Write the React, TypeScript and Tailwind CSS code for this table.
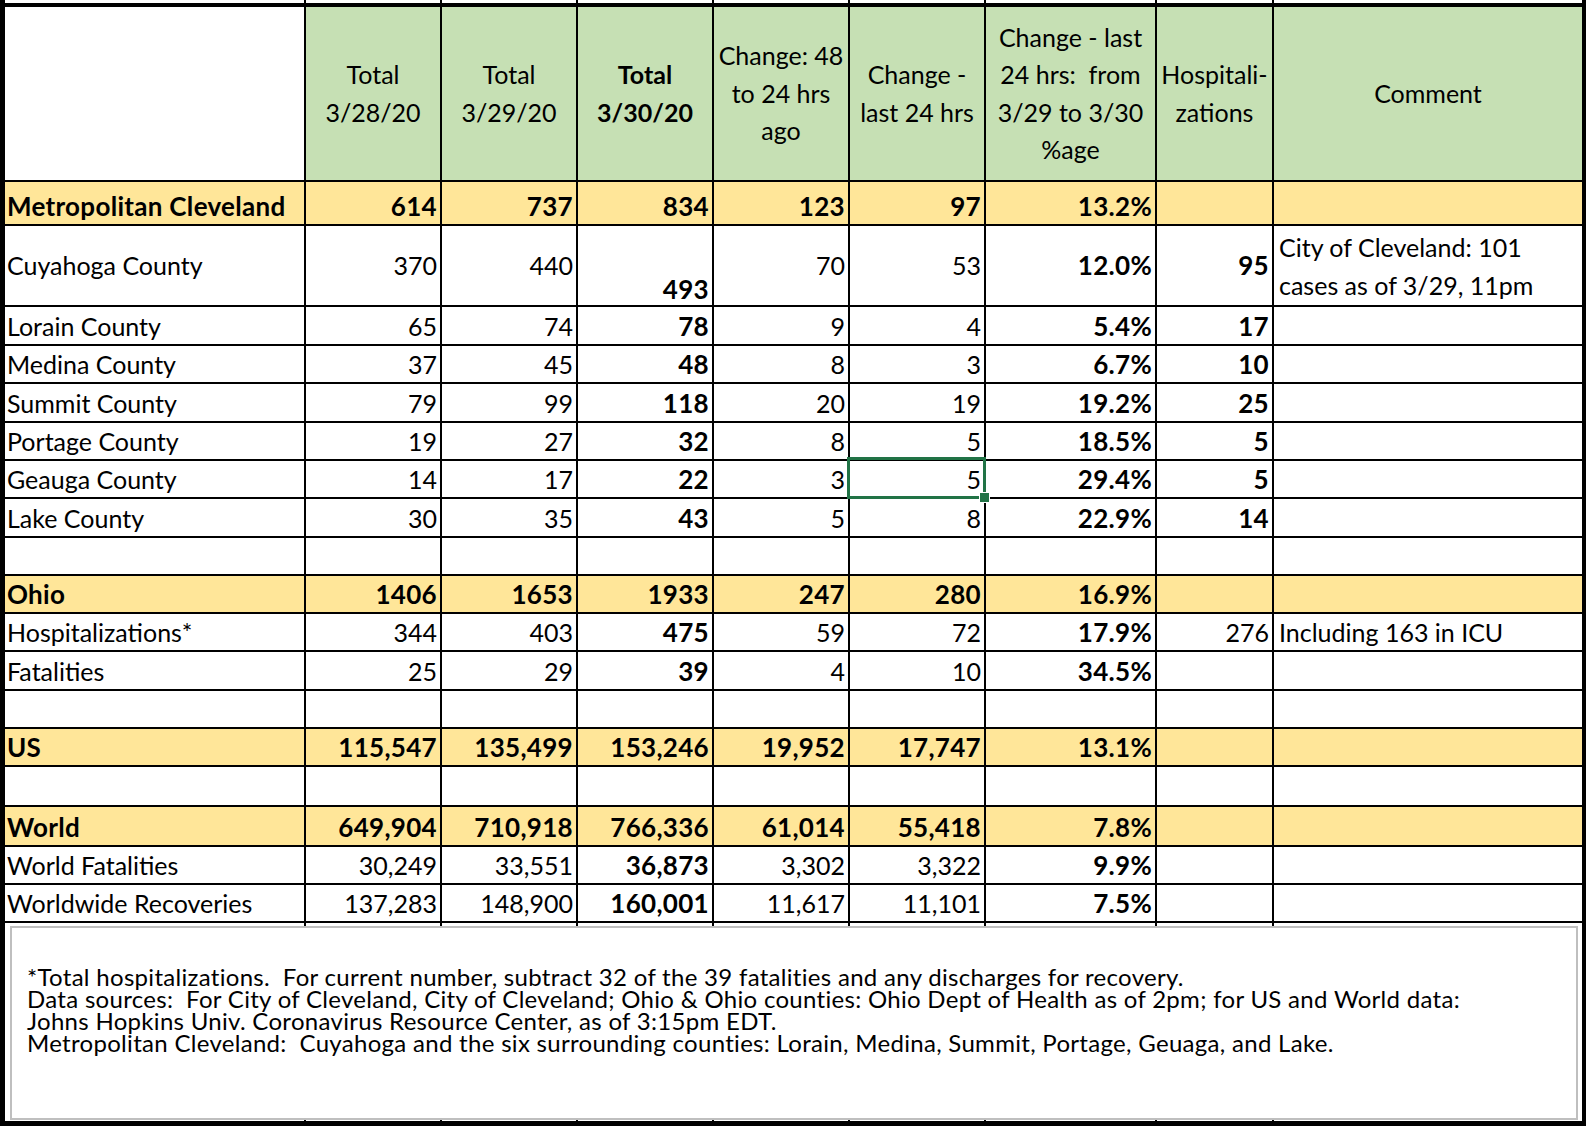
import clsx from 'clsx'

const COLS = 'grid grid-cols-[301px_136px_136px_136px_136px_136px_171px_117px_308px]'

type RowDef = {
  label: string
  vals: string[]
  h: string
  total?: boolean
  hosp?: string
  hospRegular?: boolean
  comment?: string
  selected?: boolean
}

const rows: RowDef[] = [
  { label: 'Lorain County', vals: ['65', '74', '78', '9', '4', '5.4%'], hosp: '17', h: 'h-[39px]' },
  { label: 'Medina County', vals: ['37', '45', '48', '8', '3', '6.7%'], hosp: '10', h: 'h-[38px]' },
  { label: 'Summit County', vals: ['79', '99', '118', '20', '19', '19.2%'], hosp: '25', h: 'h-[39px]' },
  { label: 'Portage County', vals: ['19', '27', '32', '8', '5', '18.5%'], hosp: '5', h: 'h-[38px]' },
  { label: 'Geauga County', vals: ['14', '17', '22', '3', '5', '29.4%'], hosp: '5', h: 'h-[38px]', selected: true },
  { label: 'Lake County', vals: ['30', '35', '43', '5', '8', '22.9%'], hosp: '14', h: 'h-[39px]' },
  { label: '', vals: ['', '', '', '', '', ''], h: 'h-[38px]' },
  { label: 'Ohio', vals: ['1406', '1653', '1933', '247', '280', '16.9%'], h: 'h-[38px]', total: true },
  {
    label: 'Hospitalizations*',
    vals: ['344', '403', '475', '59', '72', '17.9%'],
    hosp: '276',
    hospRegular: true,
    comment: 'Including 163 in ICU',
    h: 'h-[38px]'
  },
  { label: 'Fatalities', vals: ['25', '29', '39', '4', '10', '34.5%'], h: 'h-[39px]' },
  { label: '', vals: ['', '', '', '', '', ''], h: 'h-[38px]' },
  { label: 'US', vals: ['115,547', '135,499', '153,246', '19,952', '17,747', '13.1%'], h: 'h-[38px]', total: true },
  { label: '', vals: ['', '', '', '', '', ''], h: 'h-[40px]' },
  { label: 'World', vals: ['649,904', '710,918', '766,336', '61,014', '55,418', '7.8%'], h: 'h-[40px]', total: true },
  { label: 'World Fatalities', vals: ['30,249', '33,551', '36,873', '3,302', '3,322', '9.9%'], h: 'h-[38px]' },
  {
    label: 'Worldwide Recoveries',
    vals: ['137,283', '148,900', '160,001', '11,617', '11,101', '7.5%'],
    h: 'h-[38px]'
  }
]

const headers: string[][] = [
  [],
  ['Total', '3/28/20'],
  ['Total', '3/29/20'],
  ['Total', '3/30/20'],
  ['Change: 48', 'to 24 hrs', 'ago'],
  ['Change -', 'last 24 hrs'],
  ['Change - last', '24 hrs:  from', '3/29 to 3/30', '%age'],
  ['Hospitali-', 'zations'],
  ['Comment']
]

const notes = [
  '*Total hospitalizations.  For current number, subtract 32 of the 39 fatalities and any discharges for recovery.',
  'Data sources:  For City of Cleveland, City of Cleveland; Ohio & Ohio counties: Ohio Dept of Health as of 2pm; for US and World data:',
  'Johns Hopkins Univ. Coronavirus Resource Center, as of 3:15pm EDT.',
  'Metropolitan Cleveland:  Cuyahoga and the six surrounding counties: Lorain, Medina, Summit, Portage, Geuaga, and Lake.'
]

// bold Lato runs narrower than the original bold face, so nudge it up a bit
const BOLD = 'font-bold text-[26px] tracking-[0.3px]'

function cellBorder(i: number) {
  return i === 8 ? 'border-b-2 border-black' : 'border-b-2 border-r-2 border-black'
}

function DataRow({ row }: { row: RowDef }) {
  const bg = row.total ? 'bg-[#ffe699]' : 'bg-white'
  const cells = [row.label, ...row.vals, row.hosp ?? '', row.comment ?? '']
  return (
    <div className={clsx(COLS, row.h)}>
      {cells.map((text, i) => {
        const bold = row.total || i === 3 || i === 6 || (i === 7 && !row.hospRegular)
        const left = i === 0 || i === 8
        return (
          <div
            key={i}
            className={clsx(
              'relative flex items-end pb-[3px] leading-[30px] whitespace-nowrap',
              cellBorder(i),
              bg,
              left ? 'justify-start pl-[2px]' : 'justify-end pr-[3px]',
              i === 8 && 'pl-[5px]',
              bold && BOLD
            )}>
            {text}
            {row.selected && i === 5 && (
              <div className="absolute -top-[4px] -left-[3px] -right-[2px] -bottom-[2px] z-10 border-[3px] border-[#217346]">
                <div className="absolute -right-[7px] -bottom-[7px] h-[11px] w-[11px] border border-white bg-[#217346]" />
              </div>
            )}
          </div>
        )
      })}
    </div>
  )
}

export default function App() {
  return (
    <div className="h-[1126px] w-[1586px] overflow-hidden border-l-[5px] border-r-[4px] border-black bg-white font-['Lato',sans-serif] text-[25px] text-black">
      {/* sliver of the row above */}
      <div className={clsx(COLS, 'h-[3px]')}>
        {headers.map((_, i) => (
          <div key={i} className={i === 8 ? '' : 'border-r-2 border-black'} />
        ))}
      </div>
      <div className="h-[4px] bg-black" />

      {/* header */}
      <div className={clsx(COLS, 'h-[175px]')}>
        {headers.map((lines, i) => (
          <div
            key={i}
            className={clsx(
              'flex flex-col items-center justify-center text-center leading-[37.5px] whitespace-pre',
              cellBorder(i),
              i === 0 ? 'bg-white' : 'bg-[#c6e0b4]',
              i === 3 && 'font-bold'
            )}>
            {lines.map((l, j) => (
              <span key={j}>{l}</span>
            ))}
          </div>
        ))}
      </div>

      {/* Metropolitan Cleveland */}
      <DataRow
        row={{
          label: 'Metropolitan Cleveland',
          vals: ['614', '737', '834', '123', '97', '13.2%'],
          h: 'h-[44px]',
          total: true
        }}
      />

      {/* Cuyahoga - taller row */}
      <div className={clsx(COLS, 'h-[81px]')}>
        <div className={clsx('flex items-center pl-[2px]', cellBorder(0))}>Cuyahoga County</div>
        <div className={clsx('flex items-center justify-end pr-[3px]', cellBorder(1))}>370</div>
        <div className={clsx('flex items-center justify-end pr-[3px]', cellBorder(2))}>440</div>
        <div className={clsx('flex items-end justify-end pr-[3px] pb-[1px] leading-[30px]', BOLD, cellBorder(3))}>
          493
        </div>
        <div className={clsx('flex items-center justify-end pr-[3px]', cellBorder(4))}>70</div>
        <div className={clsx('flex items-center justify-end pr-[3px]', cellBorder(5))}>53</div>
        <div className={clsx('flex items-center justify-end pr-[3px]', BOLD, cellBorder(6))}>12.0%</div>
        <div className={clsx('flex items-center justify-end pr-[3px]', BOLD, cellBorder(7))}>95</div>
        <div className={clsx('flex flex-col justify-center pl-[5px] leading-[38px] whitespace-nowrap', cellBorder(8))}>
          <span>City of Cleveland: 101</span>
          <span>cases as of 3/29, 11pm</span>
        </div>
      </div>

      {rows.map((r, i) => (
        <DataRow key={i} row={r} />
      ))}

      {/* text box over the cells below */}
      <div className="relative h-[198px]">
        <div className={clsx(COLS, 'h-full')}>
          {headers.map((_, i) => (
            <div key={i} className={i === 8 ? '' : 'border-r-2 border-black'} />
          ))}
        </div>
        <div className="absolute top-[3px] left-[5px] right-[4px] bottom-[1px] border-2 border-[#bfbfbf] bg-white pl-[15px] pt-[38px] text-[24px] leading-[22px] tracking-[0.3px] whitespace-pre">
          {notes.map((n, i) => (
            <div key={i}>{n}</div>
          ))}
        </div>
      </div>
      <div className="h-[5px] bg-black" />
    </div>
  )
}
